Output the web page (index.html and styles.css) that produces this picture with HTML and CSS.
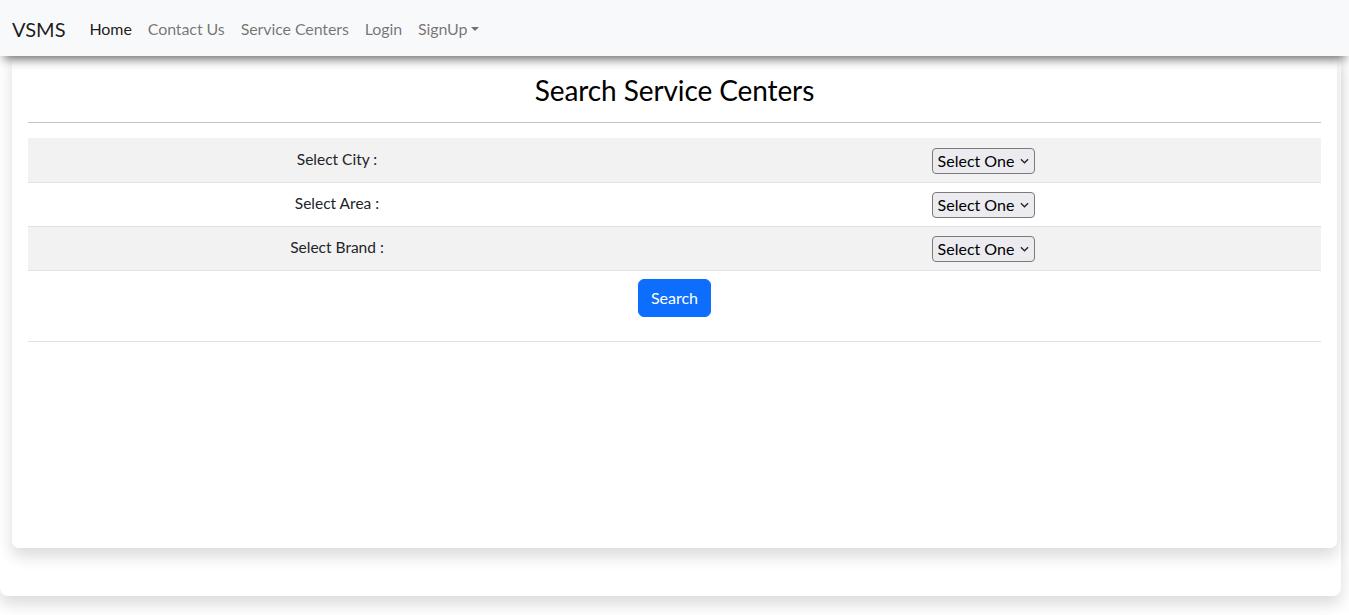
FILE: index.html
```html
<!DOCTYPE html>
<html lang="en">
<head>
<meta charset="utf-8">
<title>VSMS - Search Service Centers</title>
<link rel="stylesheet" href="styles.css">
</head>
<body>
<nav class="navbar">
  <a class="brand" href="#">VSMS</a>
  <ul class="nav-list">
    <li><a class="nav-link active" href="#">Home</a></li>
    <li><a class="nav-link" href="#">Contact Us</a></li>
    <li><a class="nav-link" href="#">Service Centers</a></li>
    <li><a class="nav-link" href="#">Login</a></li>
    <li><a class="nav-link dropdown-toggle" href="#">SignUp</a></li>
  </ul>
</nav>
<div class="outer">
  <div class="card">
    <h3 class="title">Search Service Centers</h3>
    <hr class="rule">
    <table class="search-table">
      <colgroup><col class="col-label"><col class="col-field"></colgroup>
      <tbody>
        <tr class="striped">
          <td class="label-cell">Select City :</td>
          <td class="field-cell"><span class="select"><span class="select-text">Select One</span><svg class="chev" viewBox="0 0 10 6" width="9" height="6"><path d="M1 1 L5 5 L9 1" fill="none" stroke="#222" stroke-width="1.4"/></svg></span></td>
        </tr>
        <tr>
          <td class="label-cell">Select Area :</td>
          <td class="field-cell"><span class="select"><span class="select-text">Select One</span><svg class="chev" viewBox="0 0 10 6" width="9" height="6"><path d="M1 1 L5 5 L9 1" fill="none" stroke="#222" stroke-width="1.4"/></svg></span></td>
        </tr>
        <tr class="striped">
          <td class="label-cell">Select Brand :</td>
          <td class="field-cell"><span class="select"><span class="select-text">Select One</span><svg class="chev" viewBox="0 0 10 6" width="9" height="6"><path d="M1 1 L5 5 L9 1" fill="none" stroke="#222" stroke-width="1.4"/></svg></span></td>
        </tr>
        <tr class="button-row">
          <td colspan="2" class="button-cell"><button class="btn" type="button">Search</button></td>
        </tr>
      </tbody>
    </table>
  </div>
</div>
</body>
</html>
```

FILE: styles.css
```css
* { box-sizing: border-box; }
html, body {
  margin: 0;
  padding: 0;
  background: #ffffff;
  font-family: Lato, "Noto Sans", "Liberation Sans", sans-serif;
  color: #212529;
  font-size: 16px;
  line-height: 1.5;
}
body { padding-bottom: 19px; }
.navbar {
  position: relative;
  z-index: 2;
  height: 56px;
  background: #f8f9fa;
  display: flex;
  align-items: center;
  padding: 9px 12px 7px;
  box-shadow: 0 7px 10px -4px rgba(0,0,0,0.6);
}
.brand {
  font-size: 20px;
  line-height: 30px;
  padding: 5px 0;
  margin-right: 16px;
  color: rgba(0,0,0,0.9);
  text-decoration: none;
}
.nav-list {
  display: flex;
  list-style: none;
  margin: 0;
  padding: 0;
}
.nav-link {
  display: block;
  padding: 8px;
  color: rgba(0,0,0,0.55);
  text-decoration: none;
  line-height: 24px;
  letter-spacing: -0.1px;
}
.nav-link.active { color: rgba(0,0,0,0.9); }
.dropdown-toggle::after {
  content: "";
  display: inline-block;
  margin-left: 4px;
  vertical-align: 4px;
  border-top: 4.8px solid;
  border-left: 4.8px solid transparent;
  border-right: 4.8px solid transparent;
}
.outer {
  width: 1341px;
  padding: 0 4px 48px 12px;
  border-radius: 0 0 8px 8px;
  box-shadow: 0 8px 16px rgba(0,0,0,0.15);
  background: #fff;
}
.card {
  height: 492px;
  background: #fff;
  border-radius: 0 0 7px 7px;
  box-shadow: 0 8px 16px rgba(0,0,0,0.15);
  padding: 17px 16px 16px;
}
.title {
  margin: 0;
  font-size: 28px;
  line-height: 34px;
  font-weight: 400;
  text-align: center;
  color: #000;
  letter-spacing: -0.1px;
}
.rule {
  margin: 15px 0 15px;
  border: 0;
  border-top: 1px solid #c4c4c4;
  height: 0;
}
.search-table {
  width: 100%;
  border-collapse: collapse;
  table-layout: fixed;
}
.col-label { width: 618px; }
.col-field { width: 675px; }
.search-table td {
  border-bottom: 1px solid #dee2e6;
  padding: 0 8px;
  height: 44px;
  vertical-align: middle;
  text-align: center;
}
.striped td { background: #f2f2f2; }
.label-cell { font-size: 15.5px; color: #212529; }
.search-table td.field-cell { padding-top: 2px; }
.select {
  display: inline-flex;
  align-items: center;
  gap: 6px;
  height: 26px;
  padding: 0 5px 0 5px;
  border: 1px solid #7a7a7a;
  border-radius: 4px;
  background: #ececf0;
  color: #000;
  font-size: 16px;
  line-height: 24px;
  vertical-align: middle;
}
.chev { display: block; }
.button-row td {
  height: 71px;
  vertical-align: top;
  padding-top: 8px;
}
.btn {
  font-family: inherit;
  font-size: 16px;
  line-height: 24px;
  padding: 6px 12px;
  color: #fff;
  background: #0d6efd;
  border: 1px solid #0d6efd;
  border-radius: 6px;
}
```
